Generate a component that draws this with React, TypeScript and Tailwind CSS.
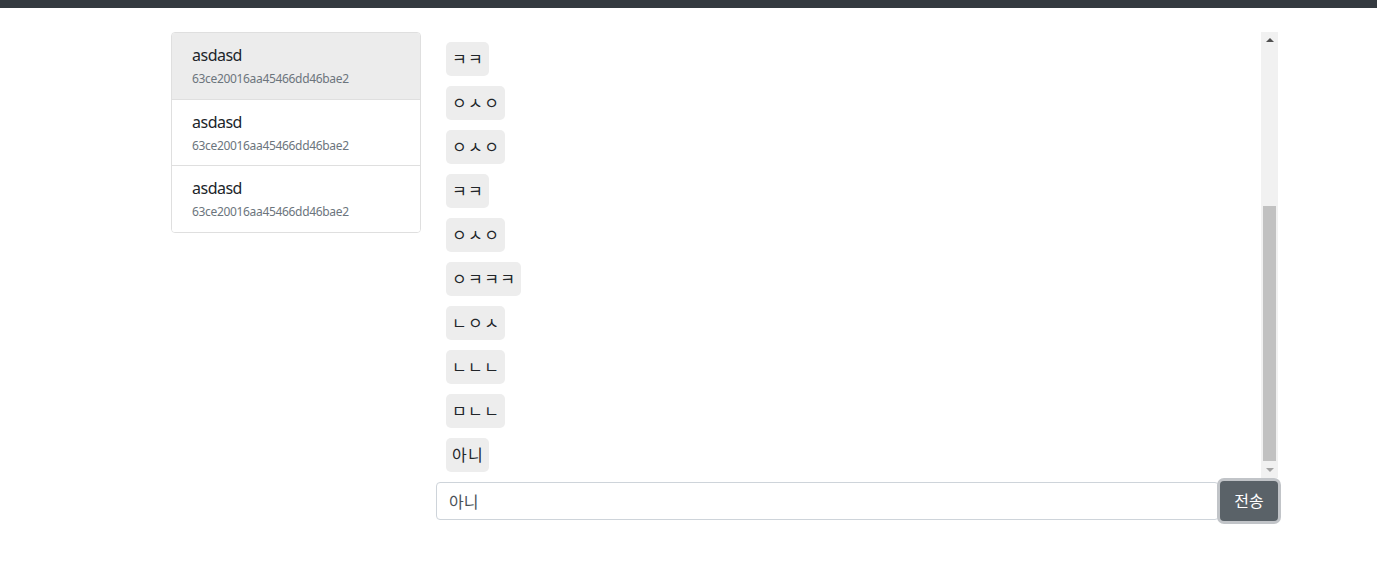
const rooms = [
  { name: "asdasd", id: "63ce20016aa45466dd46bae2", active: true },
  { name: "asdasd", id: "63ce20016aa45466dd46bae2", active: false },
  { name: "asdasd", id: "63ce20016aa45466dd46bae2", active: false },
];

const messages = [
  "ㅋㅋ",
  "ㅇㅅㅇ",
  "ㅇㅅㅇ",
  "ㅋㅋ",
  "ㅇㅅㅇ",
  "ㅇㅋㅋㅋ",
  "ㄴㅇㅅ",
  "ㄴㄴㄴ",
  "ㅁㄴㄴ",
  "아니",
];

const font = "font-['Noto_Sans','Noto_Sans_CJK_KR',sans-serif]";

const RoomItem = ({ name, id, active }: { name: string; id: string; active: boolean }) => {
  return (
    <div
      className={`border-b border-[#dfdfdf] last:border-b-0 pl-5 pt-[10px] pb-[10.5px] ${
        active ? "bg-[#ececec]" : "bg-white"
      }`}
    >
      <div className="text-[16px] leading-[24px] tracking-[-0.5px] text-[#212529]">{name}</div>
      <div className="mt-[3px] text-[12px] leading-[18px] tracking-[-0.33px] text-[#6c757d]">{id}</div>
    </div>
  );
};

const Scrollbar = () => {
  return (
    <div className="w-[17px] shrink-0 bg-[#f1f1f1] flex flex-col items-center">
      <div className="h-[17px] w-full flex items-center justify-center">
        <div className="w-0 h-0 border-l-[4px] border-r-[4px] border-b-[4px] border-l-transparent border-r-transparent border-b-[#505050]" />
      </div>
      <div className="mt-[157px] w-[13px] h-[259px] bg-[#c1c1c1]" />
      <div className="mt-auto h-[17px] w-full flex items-center justify-center">
        <div className="w-0 h-0 border-l-[4px] border-r-[4px] border-t-[4px] border-l-transparent border-r-transparent border-t-[#a3a3a3]" />
      </div>
    </div>
  );
};

export default function App() {
  return (
    <div className={`min-h-screen bg-white ${font}`}>
      <div className="h-2 bg-[#343a40]" />
      <div className="ml-[171px] mt-6 flex gap-[15px] items-start">
        <div className="w-[250px] border border-[#dfdfdf] rounded-[4px] overflow-hidden">
          {rooms.map((room, i) => (
            <RoomItem key={i} {...room} />
          ))}
        </div>
        <div className="w-[842px] flex flex-col">
          <div className="h-[446px] flex">
            <div className="flex-1 overflow-hidden flex flex-col justify-end gap-[10px] pl-[10px] pb-[6px]">
              {messages.map((m, i) => (
                <div
                  key={i}
                  className="self-start shrink-0 bg-[#ededed] rounded-[5px] pl-[6px] pr-[5px] py-[5px] text-[16px] leading-[24px] tracking-[1.4px] text-[#212529]"
                >
                  {m}
                </div>
              ))}
            </div>
            <Scrollbar />
          </div>
          <div className="mt-[3px] flex items-center">
            <input
              className="flex-1 h-[38px] border border-[#ced4da] rounded-[4px] px-3 text-[16px] text-[#495057] outline-none"
              defaultValue="아니"
            />
            <button className="ml-px w-[58px] h-[40px] rounded-[4px] bg-[#5a6268] text-white text-[16px] ring-[3px] ring-[#c1c4c8]">
              전송
            </button>
          </div>
        </div>
      </div>
    </div>
  );
}
